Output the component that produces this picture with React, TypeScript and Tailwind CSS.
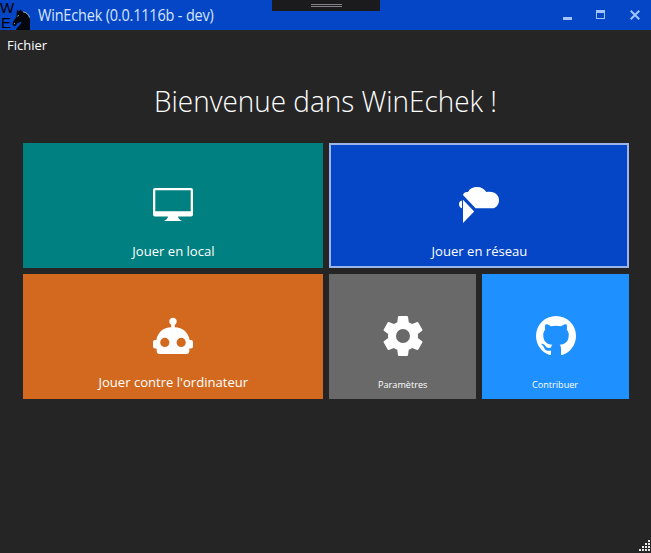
import type { ReactNode } from "react";

function KnightLogo() {
  return (
    <div className="relative h-[30px] w-[30px] shrink-0 text-black">
      <span className="absolute left-0 top-0 font-['Liberation_Sans'] text-[15px] leading-[15px]">W</span>
      <span className="absolute left-[1px] top-[15px] font-['Liberation_Sans'] text-[15px] leading-[15px]">E</span>
      <svg className="absolute left-0 top-0" width="30" height="30" viewBox="0 0 30 30">
        <path d="M17 9.5 L18.7 11.5 L20.5 9.5 L22 11.2 C27 11.5 29.5 15 30 20 V30 H16 C17 26.5 21 25.5 21.5 21.5 L17.5 23.3 L15 26.5 L12.5 25 L13 22 L16.5 16.5 Z" fill="#05070c" />
        <path d="M23 11.8 C26.5 12.3 28.8 14.5 29.5 17.5" fill="none" stroke="#b9d3e8" strokeWidth=".9" />
        <path d="M17.5 16.3 L18.8 15.4 M14 24 L14.8 23.4" stroke="#d4e3ee" strokeWidth=".9" />
      </svg>
    </div>
  );
}

function MonitorIcon() {
  return (
    <svg width="42" height="36" viewBox="0 0 42 36" fill="white">
      <path fillRule="evenodd" d="M3 1 H39 Q41 1 41 3 V27.5 Q41 29.5 39 29.5 H3 Q1 29.5 1 27.5 V3 Q1 1 3 1Z M3.3 3.3 V24.3 H38.7 V3.3Z" />
      <path d="M16 29 H26 Q26 32 30 34 H12 Q16 32 16 29Z" />
    </svg>
  );
}

function CloudPlayIcon() {
  return (
    <svg width="42" height="38" viewBox="0 0 42 38" fill="white">
      <path d="M5 9 C5.5 7 7.5 5.6 10 6 C11.5 2.8 15 1 19 1 C23.5 1 26.5 3 28.3 6 C35 4.5 41 8 41 14 C41 19 38 22.3 34 22.3 H17.5 Z" />
      <path d="M4 14.4 V22.2 C2 21.8 1 20.2 1 18.3 C1 16.2 2 14.7 4 14.4Z" />
      <path d="M5 13.8 L16.2 25.4 L5 37Z" />
    </svg>
  );
}

function RobotIcon() {
  return (
    <svg width="42" height="38" viewBox="0 0 42 38" fill="white">
      <path fillRule="evenodd" d="M19.2 10.2 V7.7 A3.7 3.7 0 1 1 22.8 7.7 V10.2 C30.5 10.2 36.5 15.5 37.6 23 H39 Q41 23 41 25 V29.5 Q41 31.5 39 31.5 H37.3 V34 Q37.3 37 34.3 37 H7.7 Q4.7 37 4.7 34 V31.5 H3 Q1 31.5 1 29.5 V25 Q1 23 3 23 H4.4 C5.5 15.5 11.5 10.2 19.2 10.2Z M12.8 20.8 A4.6 4.6 0 1 0 12.8 30 A4.6 4.6 0 1 0 12.8 20.8Z M29.2 20.8 A4.6 4.6 0 1 0 29.2 30 A4.6 4.6 0 1 0 29.2 20.8Z" />
    </svg>
  );
}

function GearIcon() {
  return (
    <svg width="48" height="48" viewBox="0 0 24 24" fill="white">
      <path d="M12 15.5A3.5 3.5 0 0 1 8.5 12 3.5 3.5 0 0 1 12 8.5a3.5 3.5 0 0 1 3.5 3.5 3.5 3.5 0 0 1-3.5 3.5m7.43-2.53c.04-.32.07-.64.07-.97s-.03-.66-.07-1l2.11-1.63c.19-.15.24-.42.12-.64l-2-3.46c-.12-.22-.39-.31-.61-.22l-2.49 1c-.52-.39-1.06-.73-1.69-.98l-.37-2.65A.506.506 0 0 0 14 2h-4c-.25 0-.46.18-.5.42l-.37 2.65c-.63.25-1.17.59-1.69.98l-2.49-1c-.22-.09-.49 0-.61.22l-2 3.46c-.13.22-.07.49.12.64L4.57 11c-.04.34-.07.67-.07 1s.03.65.07.97l-2.11 1.66c-.19.15-.25.42-.12.64l2 3.46c.12.22.39.3.61.22l2.49-1.01c.52.4 1.06.74 1.69.99l.37 2.65c.04.24.25.42.5.42h4c.25 0 .46-.18.5-.42l.37-2.65c.63-.26 1.17-.59 1.69-.99l2.49 1.01c.22.08.49 0 .61-.22l2-3.46c.12-.22.07-.49-.12-.64z" />
    </svg>
  );
}

function GithubIcon() {
  return (
    <svg width="48" height="48" viewBox="0 0 24 24" fill="white">
      <path d="M12 2A10 10 0 0 0 2 12c0 4.42 2.87 8.17 6.84 9.5.5.08.66-.23.66-.5v-1.69c-2.77.6-3.36-1.34-3.36-1.34-.46-1.16-1.11-1.47-1.11-1.47-.91-.62.07-.6.07-.6 1 .07 1.53 1.03 1.53 1.03.87 1.52 2.34 1.07 2.91.83.09-.65.35-1.09.63-1.34-2.22-.25-4.55-1.11-4.55-4.92 0-1.11.38-2 1.03-2.71-.1-.25-.45-1.29.1-2.64 0 0 .84-.27 2.75 1.02.79-.22 1.65-.33 2.5-.33s1.71.11 2.5.33c1.91-1.29 2.75-1.02 2.75-1.02.55 1.35.2 2.39.1 2.64.65.71 1.03 1.6 1.03 2.71 0 3.82-2.34 4.66-4.57 4.91.36.31.69.92.69 1.85V21c0 .27.16.59.67.5C19.14 20.16 22 16.42 22 12A10 10 0 0 0 12 2Z" />
    </svg>
  );
}

function Tile({ className, icon, label, labelClass }: { className: string; icon: ReactNode; label: string; labelClass: string }) {
  return (
    <button className={`flex h-[125px] flex-col items-center justify-between text-white ${className}`}>
      <span className="flex h-[124px] items-center">{icon}</span>
      <span className={`shrink-0 whitespace-nowrap ${labelClass}`}>{label}</span>
    </button>
  );
}

const large = "-mt-[26px] h-[26px] scale-x-[.968] text-[13.5px] leading-[18px]";
const small = "-mt-[23px] h-[23px] scale-x-[.96] text-[9.5px] leading-[18px]";

export default function App() {
  return (
    <div className="relative flex h-[553px] w-[651px] flex-col overflow-hidden bg-[#252525] font-['Open_Sans','Noto_Sans',sans-serif] text-white">
      <header className="flex h-[30px] shrink-0 items-center bg-[#0546c6]">
        <KnightLogo />
        <h1 className="ml-2 origin-left scale-x-[.935] whitespace-nowrap text-[15.5px] leading-[30px] tracking-[-0.2px] text-[#d5e5ff]">WinEchek (0.0.1116b - dev)</h1>
        <div className="ml-auto flex h-[30px] items-center">
          <button className="flex h-full w-[34px] items-center justify-center" aria-label="Réduire">
            <svg width="10" height="10" viewBox="0 0 10 10"><path d="M0 7 H9 V10 H0Z" fill="#a3c4ff" /></svg>
          </button>
          <button className="flex h-full w-[33px] items-center justify-center pr-[2px]" aria-label="Agrandir">
            <svg width="10" height="10" viewBox="0 0 10 10"><path d="M0 0 H9 V9 H0Z M1 3 V8 H8 V3Z" fillRule="evenodd" fill="#a3c4ff" /></svg>
          </button>
          <button className="flex h-full w-[33px] items-center justify-center" aria-label="Fermer">
            <svg width="10" height="10" viewBox="0 0 10 10"><path d="M.7 .7 L9.3 9.3 M9.3 .7 L.7 9.3" stroke="#a3c4ff" strokeWidth="2" /></svg>
          </button>
        </div>
      </header>
      <div className="absolute left-[272px] top-0 flex h-[11px] w-[108px] flex-col items-center gap-px bg-[#1b1a1c] pt-1">
        <div className="h-px w-[31px] bg-[#858188]" />
        <div className="h-px w-[31px] bg-[#858188]" />
      </div>
      <nav className="flex h-[30px] shrink-0 items-center px-[7px] text-[13px] leading-[18px]">
        <button>Fichier</button>
      </nav>
      <main className="px-[23px]">
        <h2 className="h-[83px] scale-x-[.93] whitespace-nowrap pt-5 text-center text-[30px] font-light leading-[41px]">Bienvenue dans WinEchek !</h2>
        <div className="grid w-[606px] grid-cols-[300px_147px_147px] gap-1.5">
          <Tile className="bg-[#008080]" icon={<MonitorIcon />} label="Jouer en local" labelClass={large} />
          <Tile className="col-span-2 bg-[#0546c6] shadow-[inset_0_0_0_2px_#9bb5e8]" icon={<CloudPlayIcon />} label="Jouer en réseau" labelClass={large} />
          <Tile className="bg-[#d2691e]" icon={<RobotIcon />} label="Jouer contre l'ordinateur" labelClass={large} />
          <Tile className="bg-[#696969]" icon={<GearIcon />} label="Paramètres" labelClass={small} />
          <Tile className="bg-[#1e90ff]" icon={<GithubIcon />} label="Contribuer" labelClass={small} />
        </div>
      </main>
      <svg className="absolute bottom-0 right-0" width="13" height="14" viewBox="0 0 13 14" fill="#e8e8e8">
        <path d="M10 1h2v2h-2z M7 4h2v2h-2z M10 4h2v2h-2z M4 7h2v2h-2z M7 7h2v2h-2z M10 7h2v2h-2z M1 10h2v2h-2z M4 10h2v2h-2z M7 10h2v2h-2z M10 10h2v2h-2z" />
      </svg>
    </div>
  );
}
